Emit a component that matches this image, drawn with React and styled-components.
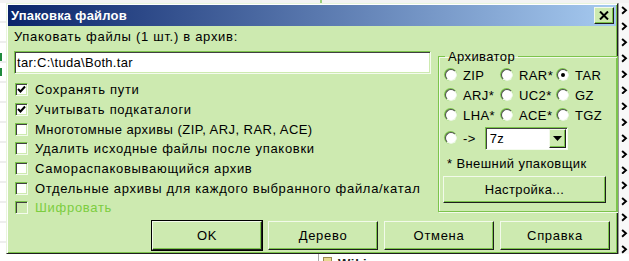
import styled, { createGlobalStyle } from 'styled-components'

const GlobalStyle = createGlobalStyle`
  html, body {
    margin: 0;
    padding: 0;
    background: #ffffff;
  }
  * {
    box-sizing: border-box;
  }
`

const FONT = `"Liberation Sans", Arial, sans-serif`
const GREEN = '#cdeab0'

const checkboxes = [
    { label: 'Сохранять пути', checked: true },
    { label: 'Учитывать подкаталоги', checked: true },
    { label: 'Многотомные архивы (ZIP, ARJ, RAR, ACE)', tight: true },
    { label: 'Удалить исходные файлы после упаковки' },
    { label: 'Самораспаковывающийся архив' },
    { label: 'Отдельные архивы для каждого выбранного файла/катал' },
    { label: 'Шифровать', disabled: true },
]

const archivers = [
    ['ZIP', 'RAR*', 'TAR'],
    ['ARJ*', 'UC2*', 'GZ'],
    ['LHA*', 'ACE*', 'TGZ'],
]

export default function App() {
    return (
        <>
            <GlobalStyle />
            <Page>
                <TopStrip />
                <Middle>
                    <LeftStrip>
                        <Mark />
                        <Mark />
                    </LeftStrip>
                    <Dialog>
                        <TitleBar>
                            <Title>Упаковка файлов</Title>
                            <CloseButton>
                                <svg width="10" height="9" viewBox="0 0 10 9">
                                    <path d="M1 0.5 L9 8.5 M9 0.5 L1 8.5" stroke="#000" strokeWidth="2" />
                                </svg>
                            </CloseButton>
                        </TitleBar>
                        <Body>
                            <LeftColumn>
                                <Caption>Упаковать файлы (1 шт.) в архив:</Caption>
                                <PathInput>tar:C:\tuda\Both.tar</PathInput>
                                <Options>
                                    {checkboxes.map((item, index) =>
                                        <OptionRow key={index}>
                                            <Box $disabled={item.disabled}>
                                                {item.checked &&
                                                    <svg width="9" height="9" viewBox="0 0 9 9">
                                                        <path d="M1 4 L3.5 6.5 L8 1.5" stroke="#000" strokeWidth="2" fill="none" />
                                                    </svg>}
                                            </Box>
                                            <OptionText $disabled={item.disabled} $tight={item.tight}>{item.label}</OptionText>
                                        </OptionRow>)}
                                </Options>
                            </LeftColumn>
                            <Group>
                                <Legend>Архиватор</Legend>
                                <RadioGrid>
                                    {archivers.flat().map((name) =>
                                        <RadioItem key={name}>
                                            <Radio $checked={name === 'TAR'} />
                                            <span>{name}</span>
                                        </RadioItem>)}
                                </RadioGrid>
                                <CustomRow>
                                    <RadioItem>
                                        <Radio />
                                        <span>-&gt;</span>
                                    </RadioItem>
                                    <Select>
                                        <span>7z</span>
                                        <SelectArrow>
                                            <svg width="9" height="5" viewBox="0 0 9 5">
                                                <path d="M0 0 L9 0 L4.5 5 Z" fill="#000" />
                                            </svg>
                                        </SelectArrow>
                                    </Select>
                                </CustomRow>
                                <Note>* Внешний упаковщик</Note>
                                <Button $wide>Настройка...</Button>
                            </Group>
                            <ButtonRow>
                                <Button $default>OK</Button>
                                <Button>Дерево</Button>
                                <Button>Отмена</Button>
                                <Button>Справка</Button>
                            </ButtonRow>
                        </Body>
                    </Dialog>
                    <RightStrip>
                        {Array.from({ length: 16 }).map((_, i) =>
                            <svg key={i} width="7" height="9" viewBox="0 0 7 9">
                                <path d="M1 1 L5 4.5 L1 8" stroke="#000" strokeWidth="2" fill="none" />
                            </svg>)}
                    </RightStrip>
                </Middle>
                <BottomStrip>
                    <FileIcon />
                    <FileName>Wiki</FileName>
                </BottomStrip>
            </Page>
        </>
    )
}

const Page = styled.div`
width: 629px;
height: 261px;
overflow: hidden;
display: flex;
flex-direction: column;
font-family: ${FONT};
font-size: 13px;
letter-spacing: 0.7px;
color: #000;
background: #f6f6f6;
`
const TopStrip = styled.div`
height: 3px;
flex: none;
background: linear-gradient(to right, #f3f3f3 320px, #9ccf7c 320px, #9ccf7c 322px, #f3f3f3 322px);
`
const Middle = styled.div`
display: flex;
height: 251px;
flex: none;
`
const LeftStrip = styled.div`
width: 6px;
display: flex;
flex-direction: column;
gap: 7px;
padding-top: 50px;
background: repeating-linear-gradient(#ffffff 0, #ffffff 18px, #eeeeee 18px, #eeeeee 20px);
`
const Mark = styled.div`
width: 2px;
height: 8px;
background: #1f8a3c;
`
const Dialog = styled.div`
width: 612px;
height: 251px;
padding: 1px;
background: ${GREEN};
border: 1px solid;
border-color: #e8f5dc #1e1e1e #1e1e1e #e8f5dc;
box-shadow: inset 1px 1px #ffffff, inset -1px -1px #7cc44c;
display: flex;
flex-direction: column;
`
const TitleBar = styled.div`
height: 21px;
display: flex;
align-items: center;
justify-content: space-between;
padding: 0 2px 0 3px;
background: linear-gradient(to right, #0a246a, #a6caf0);
`
const Title = styled.div`
color: #ffffff;
font-weight: bold;
font-size: 13px;
letter-spacing: 0.2px;
`
const CloseButton = styled.div`
width: 20px;
height: 17px;
display: flex;
align-items: center;
justify-content: center;
background: ${GREEN};
border: 1px solid;
border-color: #f2faea #1e1e1e #1e1e1e #f2faea;
box-shadow: inset -1px -1px #7cc44c;
`
const Body = styled.div`
display: grid;
grid-template-columns: 417px 173px;
column-gap: 7px;
row-gap: 3px;
padding: 3px 4px 0 6px;
`
const LeftColumn = styled.div`
display: flex;
flex-direction: column;
min-width: 0;
`
const Caption = styled.div`
height: 22px;
line-height: 16px;
`
const PathInput = styled.div`
height: 23px;
background: #ffffff;
border: 1px solid;
border-color: #7cc44c #f4fbee #f4fbee #7cc44c;
box-shadow: inset 1px 1px #404040, inset -1px -1px ${GREEN};
padding-left: 2px;
line-height: 21px;
letter-spacing: 0.3px;
margin-bottom: 6px;
`
const Options = styled.div`
display: grid;
grid-auto-rows: 19.7px;
`
const OptionRow = styled.div`
display: flex;
align-items: center;
padding-left: 1px;
white-space: nowrap;
`
const Box = styled.div`
width: 13px;
height: 13px;
flex: none;
display: flex;
align-items: center;
justify-content: center;
background: ${({ $disabled }) => $disabled ? GREEN : '#ffffff'};
border: 1px solid;
border-color: #7cc44c #f4fbee #f4fbee #7cc44c;
box-shadow: inset 1px 1px #404040, inset -1px -1px ${GREEN};
`
const OptionText = styled.span`
margin-left: 7px;
letter-spacing: ${({ $tight }) => $tight ? '0.45px' : '0.7px'};
color: ${({ $disabled }) => $disabled ? '#7ccd40' : '#000'};
`
const Group = styled.fieldset`
margin: 20px 0 0;
height: 163px;
padding: 0 4px 7px 4px;
border: 1px solid #7cc44c;
box-shadow: inset 1px 1px #f2faea, 1px 1px #f2faea;
display: flex;
flex-direction: column;
letter-spacing: 0.4px;
`
const Legend = styled.legend`
margin-left: 2px;
padding: 0 3px;
line-height: 15px;
`
const RadioGrid = styled.div`
margin: 1px 0 0 2px;
display: grid;
grid-template-columns: 56px 56px 56px;
grid-auto-rows: 20px;
`
const RadioItem = styled.div`
display: flex;
align-items: center;
gap: 6px;
`
const Radio = styled.div`
width: 12px;
height: 12px;
flex: none;
border-radius: 50%;
background: #ffffff;
border: 1px solid;
border-color: #505050 #eef8e6 #eef8e6 #505050;
box-shadow: -0.5px -0.5px 0 0.5px #7cc44c;
display: flex;
align-items: center;
justify-content: center;
&::after {
    content: '';
    width: 4px;
    height: 4px;
    border-radius: 50%;
    background: ${({ $checked }) => $checked ? '#000' : 'transparent'};
}
`
const CustomRow = styled.div`
height: 26px;
margin-left: 2px;
display: flex;
align-items: center;
gap: 9px;
`
const Select = styled.div`
width: 83px;
height: 23px;
display: flex;
align-items: center;
justify-content: space-between;
background: #ffffff;
border: 1px solid;
border-color: #7cc44c #f4fbee #f4fbee #7cc44c;
box-shadow: inset 1px 1px #404040;
padding: 2px 1px 1px 4px;
`
const SelectArrow = styled.div`
width: 17px;
height: 19px;
display: flex;
align-items: center;
justify-content: center;
background: ${GREEN};
border: 1px solid;
border-color: #f2faea #1e1e1e #1e1e1e #f2faea;
box-shadow: inset -1px -1px #7cc44c;
`
const Note = styled.div`
margin: 5px 0 0 4px;
line-height: 16px;
`
const Button = styled.div`
width: ${({ $wide }) => $wide ? '163px' : '110px'};
height: ${({ $wide }) => $wide ? '27px' : '29px'};
margin-top: ${({ $wide }) => $wide ? '4px' : '0'};
display: flex;
align-items: center;
justify-content: center;
background: ${GREEN};
border: 1px solid;
border-color: #f2faea #1e1e1e #1e1e1e #f2faea;
box-shadow: ${({ $default }) => $default
        ? '0 0 0 1px #000, inset -1px -1px #7cc44c'
        : 'inset -1px -1px #7cc44c'};
`
const ButtonRow = styled.div`
grid-column: 1 / -1;
display: flex;
justify-content: flex-end;
gap: 6px;
padding-right: 1px;
`
const RightStrip = styled.div`
width: 11px;
display: flex;
flex-direction: column;
align-items: center;
gap: 7.3px;
padding-top: 3px;
background: #f8f8f8;
border-left: 1px solid #9a9a9a;
`
const BottomStrip = styled.div`
height: 7px;
flex: none;
display: flex;
align-items: flex-start;
padding: 3px 0 0 318px;
background: linear-gradient(to right, #ffffff 318px, #a8a8a8 318px, #a8a8a8 319px, #ffffff 319px);
`
const FileIcon = styled.div`
width: 9px;
height: 8px;
margin-left: 5px;
background: #e8d890;
border: 1px solid #9a8a50;
`
const FileName = styled.div`
margin-left: 6px;
font-weight: bold;
font-size: 13px;
line-height: 13px;
color: #202020;
`
